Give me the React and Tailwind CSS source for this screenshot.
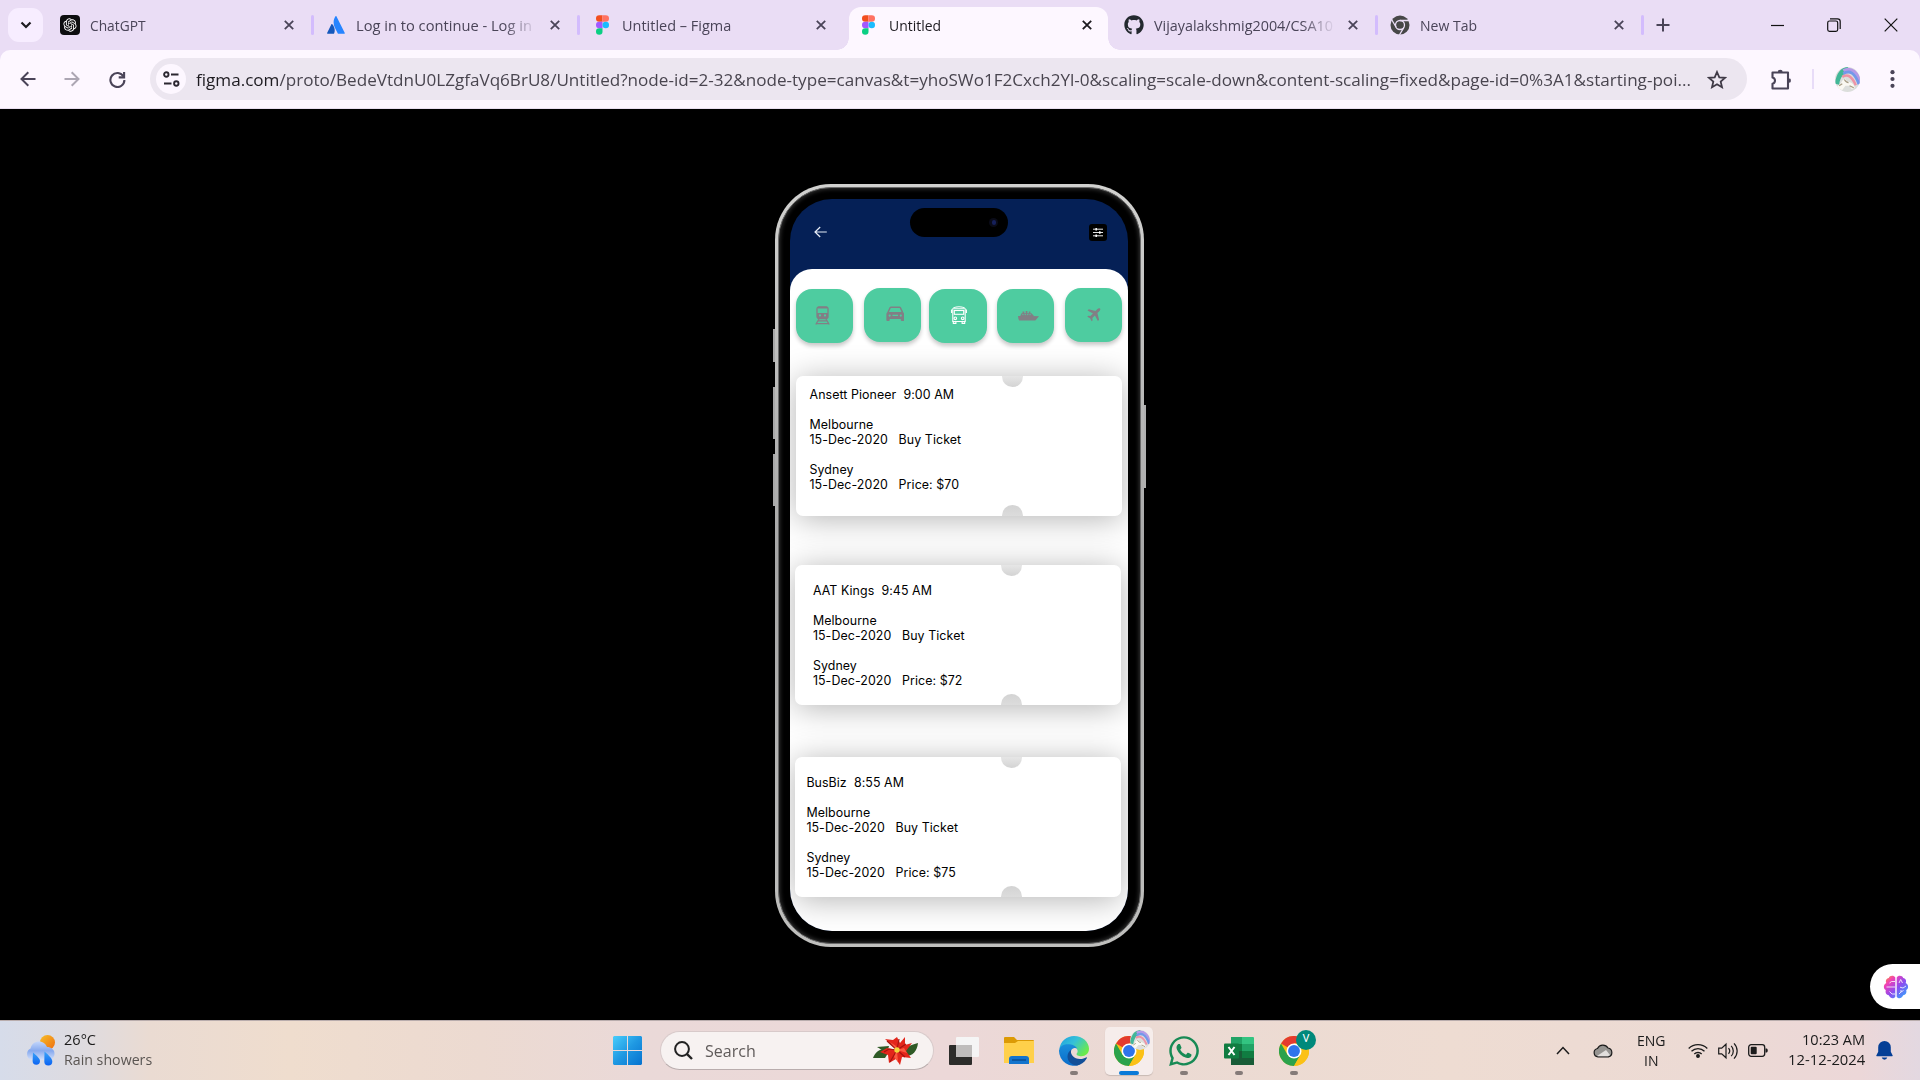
import React, { useLayoutEffect, useRef, useState } from "react";
import { FaGithub, FaWhatsapp } from "react-icons/fa";
import { RiOpenaiFill } from "react-icons/ri";

/* Text squeezed horizontally to a known width */
function Fit({ w, className = "", children }) {
  const ref = useRef(null);
  const [scale, setScale] = useState(1);
  useLayoutEffect(() => {
    setScale(w / ref.current.offsetWidth);
  }, [w]);
  return (
    <span className={"flex shrink-0 " + className} style={{ width: w }}>
      <span ref={ref} className="inline-block shrink-0 origin-left whitespace-pre" style={{ transform: `scaleX(${scale})` }}>
        {children}
      </span>
    </span>
  );
}

const FigmaLogo = () => (
  <svg width="13" height="20" viewBox="0 0 12 18">
    <path d="M3 0h3v6H3a3 3 0 0 1 0-6z" fill="#f24e1e" />
    <path d="M6 0h3a3 3 0 0 1 0 6H6z" fill="#ff7262" />
    <path d="M3 6h3v6H3a3 3 0 0 1 0-6z" fill="#a259ff" />
    <circle cx="9" cy="9" r="3" fill="#1abcfe" />
    <path d="M3 12h3v3a3 3 0 1 1-3-3z" fill="#0acf83" />
  </svg>
);

const AtlassianLogo = () => (
  <svg width="18" height="18" viewBox="0 0 18 18">
    <path d="M5.3 8.2c-.3-.3-.7-.3-.9.1L.1 17c-.2.4 0 .8.5.8h6c.2 0 .4-.1.5-.3C8.400 14.800 7.600 10.600 5.300 8.200z" fill="#1558bc" />
    <path d="M8.500.3C6 4.100 6.200 8.400 7.900 11.700l2.900 5.800c.1.2.3.3.5.3h6c.5 0 .7-.4.5-.8L9.400.3c-.2-.4-.7-.4-.9 0z" fill="#2684ff" />
  </svg>
);

const ChromeMono = () => (
  <svg width="20" height="20" viewBox="0 0 20 20">
    <circle cx="10" cy="10" r="9.500" fill="#474747" />
    <g stroke="#eaddf5" strokeWidth="1.300" fill="none">
      <circle cx="10" cy="10" r="4.500" />
      <path d="M10 5.500h9M6.100 12.300 1.600 4.500M13.900 12.300 9.400 20" />
    </g>
    <circle cx="10" cy="10" r="2.900" fill="#474747" />
  </svg>
);

const Cross = ({ color = "#4a4453" }) => (
  <svg width="10" height="10" viewBox="0 0 10 10">
    <path d="M.8.800 9.200 9.200M9.200.800.800 9.200" stroke={color} strokeWidth="1.800" />
  </svg>
);

const TABS = [
  { title: "ChatGPT", w: 56, icon: "gpt", sep: true },
  { title: "Log in to continue - Log in", w: 176, icon: "atl", sep: true, fade: true },
  { title: "Untitled – Figma", w: 109, icon: "figma" },
  { title: "Untitled", w: 52, icon: "figma", active: true },
  { title: "Vijayalakshmig2004/CSA10", w: 179, icon: "gh", sep: true, fade: true },
  { title: "New Tab", w: 57, icon: "chrome", sep: true },
];

function TabIcon({ name }) {
  if (name === "gpt")
    return (
      <span className="flex h-5 w-5 items-center justify-center rounded bg-[#0d0d0f] text-white">
        <RiOpenaiFill size={16} />
      </span>
    );
  if (name === "atl") return <AtlassianLogo />;
  if (name === "figma") return <FigmaLogo />;
  if (name === "gh") return <FaGithub size={20} color="#24292f" />;
  return <ChromeMono />;
}

function Tab({ tab }) {
  return (
    <div className={"relative flex h-[43px] shrink-0 items-center pb-[7px] " + (tab.active ? "w-[259px] mr-[7px] rounded-t-[12px] bg-[#fdf7ff]" : "w-[266px]")}>
      {tab.active && (
        <>
          <span className="absolute bottom-0 -left-3 h-3 w-3 bg-[radial-gradient(circle_at_0_0,transparent_11.5px,#fdf7ff_12px)]" />
          <span className="absolute bottom-0 -right-3 h-3 w-3 bg-[radial-gradient(circle_at_100%_0,transparent_11.5px,#fdf7ff_12px)]" />
        </>
      )}
      <span className="ml-[9px] flex w-5 justify-center">
        <TabIcon name={tab.icon} />
      </span>
      <div className={"ml-[10px] flex w-[180px] overflow-hidden text-[15px] leading-[22px] " + (tab.active ? "pl-px text-[#1d1b20]" : "text-[#4a4458]") + (tab.fade ? " [mask-image:linear-gradient(to_right,black_82%,transparent_101%)]" : "")}>
        <Fit w={tab.w}>{tab.title}</Fit>
      </div>
      <span className="ml-[13px] flex w-3 justify-center">
        <Cross color={tab.active ? "#1d1b20" : "#4a4458"} />
      </span>
      {tab.sep && <span className="ml-[16px] h-5 w-[3px] rounded-full bg-[#d3bcfd]" />}
    </div>
  );
}

function UnicornAvatar({ size }) {
  return (
    <svg width={size} height={size} viewBox="0 0 24 24">
      <defs>
        <clipPath id={"av" + size}><circle cx="12" cy="12" r="12" /></clipPath>
      </defs>
      <g clipPath={"url(#av" + size + ")"}>
        <rect width="24" height="24" fill="#dcdedc" />
        <path d="M0 16C1 6 6 0 12 0l3 4C9 5 5 9 4 17z" fill="#41b797" />
        <path d="M8 3.500c8-4 14 2 17 13" stroke="#b59ae6" strokeWidth="3" fill="none" />
        <path d="M8 6.500c6-4 11-1 15 10" stroke="#7398ea" strokeWidth="2.800" fill="none" />
        <path d="M7 9.500c5-3 9-1 13 8" stroke="#ee93a6" strokeWidth="2.400" fill="none" />
        <path d="M2 19c2-2 4-3 5-6l3-2 1 3c4 0 7 2 8 6l-3 1-2-3-4 0-3 4-4-1z" fill="#faf8f2" />
        <path d="M9 12c1 2 2 3 4 3M14 18l4 2M4 18l3-2" stroke="#a59a82" strokeWidth="1.100" fill="none" />
      </g>
    </svg>
  );
}

function Browser() {
  return (
    <header className="h-[109px] w-full bg-[#eaddf5]">
      <div className="flex h-[50px] items-end">
        <div className="mb-2 ml-2 flex h-[34px] w-[35px] items-center justify-center rounded-[11px] bg-[#f7edff]">
          <svg width="12" height="8" viewBox="0 0 12 8"><path d="m1.500 1.500 4.500 4.500 4.500-4.500" stroke="#1d1b20" strokeWidth="2.200" fill="none" /></svg>
        </div>
        <div className="ml-2 flex items-end">
          {TABS.map((t) => <Tab key={t.title} tab={t} />)}
        </div>
        <div className="flex h-[50px] w-[273px] items-center">
          <svg className="ml-[8px]" width="16" height="16" viewBox="0 0 16 16"><path d="M8 1.500v13M1.500 8h13" stroke="#4a4458" strokeWidth="2" /></svg>
          <svg className="ml-[100px]" width="13" height="13" viewBox="0 0 13 13"><path d="M0 6.500h13" stroke="#111" strokeWidth="1.200" /></svg>
          <svg className="ml-[43px]" width="14" height="14" viewBox="0 0 14 14" fill="none" stroke="#111" strokeWidth="1.200"><rect x=".7" y="3" width="10" height="10.300" rx="1.800" /><path d="M3 .8h7.500a2.700 2.700 0 0 1 2.700 2.700V11" /></svg>
          <svg className="ml-[43px]" width="14" height="14" viewBox="0 0 14 14"><path d="m.7.7 12.600 12.600M13.300.7.7 13.300" stroke="#111" strokeWidth="1.200" /></svg>
        </div>
      </div>
      <div className="flex h-[59px] items-center rounded-t-[10px] border-b border-[#e9dff0] bg-[#fdf7ff]">
        <svg className="ml-[19.5px]" width="16" height="16" viewBox="0 0 16 16" fill="none" stroke="#4a4458" strokeWidth="2"><path d="M15.500 8H1.800M8.300 1.200 1.500 8l6.800 6.800" /></svg>
        <svg className="ml-[28.5px]" width="16" height="16" viewBox="0 0 16 16" fill="none" stroke="#aca6b3" strokeWidth="2"><path d="M.5 8h13.700M7.700 1.200 14.500 8l-6.800 6.800" /></svg>
        <svg className="ml-[29px]" width="17" height="17" viewBox="0 0 17 17" fill="none" stroke="#4a4458" strokeWidth="2.100"><path d="M14.500 5.600A7 7 0 1 0 15.400 9" /><path d="M15.100 1v5.400H9.700" /></svg>
        <div className="ml-[24px] flex h-[42px] w-[1597px] items-center rounded-full bg-[#ece6f0]">
          <span className="ml-[6px] flex h-[30px] w-[30px] items-center justify-center rounded-full bg-[#fdf7ff]">
            <svg width="17" height="16" viewBox="0 0 17 16" fill="none" stroke="#2b2730" strokeWidth="1.900"><circle cx="3.300" cy="3.500" r="2.200" /><path d="M8 3.500h7.500M1 12.500h7.500" /><circle cx="13.300" cy="12.500" r="2.200" /></svg>
          </span>
          <div className="ml-[10px] pt-px text-[17px] leading-6 text-[#49454f]">
            <Fit w={1495}>
              <span className="text-[#1d1b20]">figma.com</span>/proto/BedeVtdnU0LZgfaVq6BrU8/Untitled?node-id=2-32&node-type=canvas&t=yhoSWo1F2Cxch2Yl-0&scaling=scale-down&content-scaling=fixed&page-id=0%3A1&starting-poi...
            </Fit>
          </div>
          <svg className="ml-[16px]" width="20" height="19" viewBox="0 0 20 19" fill="none" stroke="#3f3a46" strokeWidth="1.800"><path d="m10 2 2.300 5.300 5.700.5-4.300 3.800 1.300 5.600-5-3-5 3 1.300-5.600L2 7.800l5.700-.5z" /></svg>
        </div>
        <svg className="ml-[24px]" width="21" height="21" viewBox="0 0 21 21" fill="none" stroke="#4a4458" strokeWidth="2.100"><path d="M1.500 3.500h15.500v16H1.500v-4.700a3.300 3.300 0 0 0 0-6.400z" strokeLinejoin="round" /><path d="M7 3a2.200 2.200 0 0 1 4.400 0zM17.500 9.400a2.200 2.200 0 0 1 0 4.400z" fill="#4a4458" stroke="none" /><path d="M7.300 2.500h4M18.500 9.800v3.400" /></svg>
        <span className="ml-[20px] h-5 w-[2px] bg-[#e8dcf8]" />
        <span className="ml-[21px]"><UnicornAvatar size={25} /></span>
        <svg className="ml-[30px]" width="5" height="18" viewBox="0 0 5 18" fill="#4a4458"><circle cx="2.500" cy="2.200" r="2.100" /><circle cx="2.500" cy="9" r="2.100" /><circle cx="2.500" cy="15.800" r="2.100" /></svg>
      </div>
    </header>
  );
}

/* Transport category icons */
const TrainIcon = () => (
  <svg width="15" height="19" viewBox="0 0 15 19" fill="none" stroke="#827f85" strokeWidth="1.300">
    <rect x="2" y=".8" width="11" height="11.800" rx="2" />
    <path d="M3 1.600h9" strokeWidth="1.800" />
    <path fillRule="evenodd" d="M2 7h11v5H2zM5 8.300a1.100 1.100 0 1 0 0 2.200 1.100 1.100 0 0 0 0-2.200zM10 8.300a1.100 1.100 0 1 0 0 2.200 1.100 1.100 0 0 0 0-2.200z" fill="#827f85" stroke="none" />
    <path d="M4 13 .8 18.500M11 13l3.200 5.500M3.200 14.800h8.600M1.300 17.600h12.400" />
  </svg>
);
const CarIcon = () => (
  <svg width="18.500" height="16" viewBox="0 0 20 17" fill="#827f85">
    <path fillRule="evenodd" d="M1.200 7 3.700 1.600Q4.300.4 5.600.4h8.800q1.300 0 1.900 1.200L18.800 7q.8.700.8 1.900V15q0 1.200-1 1.200h-1.600q-1 0-1-1.200v-1H4v1q0 1.200-1 1.200H1.400q-1 0-1-1.200V8.900Q.4 7.700 1.200 7zM3.200 6.400h13.600l-2-4.500H5.200zM4 9a1.200 1.200 0 1 0 0 2.400A1.200 1.200 0 0 0 4 9zm12 0a1.200 1.200 0 1 0 0 2.400A1.200 1.200 0 0 0 16 9zM7 9.300v1.400h6V9.300z" />
  </svg>
);
const BusIcon = () => (
  <svg width="16" height="18" viewBox="0 0 16 18" fill="none" stroke="#fff" strokeWidth="1.100">
    <path d="M1.800 15.500V3Q2.500.8 8 .8T14.200 3v12.500z" />
    <path d="M3 2.700h10" />
    <rect x="3.300" y="4.500" width="9.400" height="3.800" />
    <path d="M.6 3.500v3.500M15.400 3.500v3.500" />
    <circle cx="4.300" cy="12.300" r="1.300" /><circle cx="11.700" cy="12.300" r="1.300" />
    <path d="M2.300 15.500v1.900h2.600v-1.900M11.100 15.500v1.900h2.600v-1.900" />
  </svg>
);
const ShipIcon = () => (
  <svg width="21" height="10" viewBox="0 0 21 10" fill="#827f85">
    <path d="M0 5h14l7 .2L17.300 9.600H1.200Q.2 8 0 5z" /><path d="M2.300 5 3.500 2.300h10L16 5zM4.500.5h1.800v2H4.500zM7.700 0h1.700v2.300H7.700zM10.800.5h1.600v2h-1.600z" />
    <path d="M4.300 3.600h9.500" stroke="#4ecca0" strokeWidth=".9" strokeDasharray="1.200 1.200" />
  </svg>
);
const PlaneIcon = () => (
  <svg width="15" height="14" viewBox="0 0 15 15" fill="#827f85">
    <path d="M14.500.6c-.8-.7-2-.4-2.800.4L9.600 3.100 2.400 1.300 1.100 2.600l5.800 3.200-2.700 2.800-2.300-.3L.8 9.400l3 1.700 1.700 3 1.100-1.100-.3-2.300L9 8l3.200 5.800 1.300-1.300-1.800-7.200 2.300-2.200c.8-.8 1.200-1.800.5-2.500z" />
  </svg>
);

const MODES = [
  { Icon: TrainIcon, cls: "ml-[0.5px] mt-[2.5px] pr-[3px]" },
  { Icon: CarIcon, cls: "ml-[11px] mt-[1.5px] pl-[4.5px] pb-[1px]" },
  { Icon: BusIcon, cls: "ml-[8px] mt-[2.5px] pl-[3px] pb-[1px]" },
  { Icon: ShipIcon, cls: "ml-[10.3px] mt-[2.5px] pl-[5px]" },
  { Icon: PlaneIcon, cls: "ml-[10.6px] mt-[1.5px] pr-px" },
];

const TRIPS = [
  { name: "Ansett Pioneer", time: "9:00 AM", price: "$70", cls: "mt-[33px] ml-px", pad: "pl-[13.5px] pt-[11px]" },
  { name: "AAT Kings", time: "9:45 AM", price: "$72", cls: "mt-[49px] ml-[0.4px]", pad: "pl-[17.5px] pt-[18px]" },
  { name: "BusBiz", time: "8:55 AM", price: "$75", cls: "mt-[52px] ml-[0.4px]", pad: "pl-[11px] pt-[18px]" },
];

function Ticket({ trip }) {
  return (
    <div className={"relative h-[140px] w-[326px] shrink-0 rounded-[7px] bg-white shadow-[0_3px_32px_rgba(0,0,0,0.3)] " + trip.cls}>
      <span className="absolute left-[206px] top-0 h-[11px] w-[21px] rounded-b-full bg-linear-to-b from-[#e6e6e6] to-[#d3d3d3]" />
      <span className="absolute bottom-0 left-[206px] h-[11px] w-[21px] rounded-t-full bg-linear-to-b from-[#d3d3d3] to-[#dcdcdc]" />
      <div className={"whitespace-pre text-[12.4px] leading-[15px] tracking-[0.08px] text-black " + trip.pad}>
        <p>{trip.name + "  " + trip.time}</p>
        <p className="mt-[15px]">Melbourne</p>
        <p>{"15-Dec-2020   Buy Ticket"}</p>
        <p className="mt-[15px]">Sydney</p>
        <p>{"15-Dec-2020   Price: " + trip.price}</p>
      </div>
    </div>
  );
}

function Phone() {
  return (
    <div className="relative mt-[75px] h-[763px] w-[369px] rounded-[56px] bg-linear-to-b from-[#d2d2d0] via-[#a6a6a6] to-[#c0c0be] p-[3px] font-['Inter',sans-serif]">
      <span className="absolute -left-[2px] top-[145px] h-[33px] w-[2px] bg-[#a8a8a8]" />
      <span className="absolute -left-[2px] top-[203px] h-[52px] w-[2px] bg-[#a8a8a8]" />
      <span className="absolute -left-[2px] top-[270px] h-[52px] w-[2px] bg-[#a8a8a8]" />
      <span className="absolute -right-[2px] top-[221px] h-[83px] w-[2px] bg-[#b0b0b0]" />
      <div className="h-full w-full rounded-[53px] border border-[#6a6a6a] bg-black px-[11px] pt-[11px] shadow-[inset_0_0_4px_1px_#333]">
        <div className="relative h-[732px] w-[338px] overflow-hidden rounded-[42px] bg-[#052056]">
          <div className="absolute left-[120px] top-[9px] flex h-[29px] w-[98px] items-center justify-end rounded-full bg-black pr-[10px]">
            <span className="flex h-[9px] w-[9px] items-center justify-center rounded-full bg-[#0a0b18]"><span className="h-[5px] w-[4px] rounded-full bg-[#16205a]" /></span>
          </div>
          <div className="flex h-[70px] items-start justify-between pl-[24px] pr-[21px] pt-[25px]">
            <svg className="mt-[2px]" width="13" height="12" viewBox="0 0 13 12" fill="none" stroke="#e6ebf5" strokeWidth="1.200"><path d="M12.800 6H1M6.200 1 1 6l5.200 5" /></svg>
            <span className="flex h-[17px] w-[18px] items-center justify-center rounded-[3px] bg-black">
              <svg width="10" height="9" viewBox="0 0 10 9" fill="none" stroke="#fff"><path d="M0 1.200h10M0 4.500h10M0 7.800h10" strokeWidth=".9" /><path d="M3.200 0v2.400M6.800 3.300v2.400M3.200 6.600V9" strokeWidth="1.500" /></svg>
            </span>
          </div>
          <div className="flex h-[662px] flex-col overflow-hidden rounded-t-[22px] bg-white pl-[5px]">
            <div className="mt-[17px] flex h-[57px] shrink-0 items-start">
              {MODES.map(({ Icon, cls }, i) => (
                <div key={i} className={"flex h-[54.5px] w-[57.4px] shrink-0 items-center justify-center rounded-[16px] bg-[#4ecca0] shadow-[0_3px_4px_rgba(0,0,0,0.22)] " + cls}>
                  <Icon />
                </div>
              ))}
            </div>
            {TRIPS.map((t) => <Ticket key={t.name} trip={t} />)}
          </div>
        </div>
      </div>
    </div>
  );
}

function Brain() {
  return (
    <svg width="26" height="24" viewBox="0 0 26 24">
      <defs><linearGradient id="br" x1="0" y1="0" x2="1" y2="1"><stop offset="0" stopColor="#ffa31a" /><stop offset=".25" stopColor="#f03fb8" /><stop offset=".55" stopColor="#8b4df0" /><stop offset="1" stopColor="#22b8ff" /></linearGradient></defs>
      <path d="M12.300 2.500C11 0 6.500.3 5.800 3 3 3.500 2.300 6 3.300 8 .2 9.300.2 14 2.800 15c-.8 3 .8 5 3 5.300 1.500 3.700 5.200 3.700 6.500 1.500zM13.700 2.500C15 0 19.500.3 20.200 3c2.800.500 3.500 3 2.500 5 3.100 1.300 3.100 6 .5 7 .8 3-.8 5-3 5.300-1.500 3.700-5.200 3.700-6.500 1.500z" fill="url(#br)" />
      <path d="M12 6.500H8.500L6.500 8M12 12H3.500M12 19H9l-2.500-2.500M16 8l1.700-3.500L19.500 8M17 12.200l3 .8 3-2M16 19l2-2v-2M18 17l2.500-1.500" stroke="#fff" strokeWidth=".8" fill="none" />
    </svg>
  );
}

const Chrome = () => (
  <svg width="30" height="30" viewBox="0 0 48 48">
    <circle cx="24" cy="24" r="24" fill="#fbbf12" />
    <path d="M24 24 3.200 12A24 24 0 0 1 44.800 12H24z" fill="#e33b2e" />
    <path d="M3.200 12A24 24 0 0 0 24 48l10.400-18L24 24 13.600 30z" fill="#2ba24c" />
    <path d="M44.800 12H24l10.400 18L24 48A24 24 0 0 0 44.800 12z" fill="#fbc116" />
    <circle cx="24" cy="24" r="12" fill="#fff" /><circle cx="24" cy="24" r="9.500" fill="#2f74ea" />
  </svg>
);

const Edge = () => (
  <svg width="30" height="30" viewBox="0 0 30 30">
    <defs>
      <linearGradient id="eg" x1="0" y1="0" x2="1" y2=".6"><stop offset="0" stopColor="#1f9fe0" /><stop offset=".5" stopColor="#35c1d8" /><stop offset="1" stopColor="#6bea4c" /></linearGradient>
      <linearGradient id="eb" x1="0" y1="0" x2="0" y2="1"><stop offset="0" stopColor="#1a8edb" /><stop offset="1" stopColor="#0a6cc9" /></linearGradient>
    </defs>
    <path d="M.3 13C1.500 5 8 0 15 0c8.500 0 15 6 15 12.800 0 4.700-3.600 7.400-7.600 7.400-3 0-5.200-1-4.800-2.500.8-1 1.200-2 .9-3.500-.700-3.200-3.500-4.800-7-4.800-5 0-9 1.500-11.200 3.600z" fill="url(#eg)" />
    <path d="M0 14.500C1 9 6.500 7.800 10.800 8.300c3.500.4 6.400 2 7.500 4.500-2-1.700-5.200-1-6.300 1.800-2 5 1.800 13.500 9 13.900A15 15 0 0 1 0 14.500z" fill="url(#eb)" />
    <path d="M12.300 13.700C10.500 18 15 23 21 23c2.700 0 4.700-.8 6-1.600.6-.3 1.100.3.8.8C25.500 26.500 21.500 29 18 29.500 12 29 8.500 25 8.500 20.500c0-3 1.500-5.500 3.800-6.800z" fill="#124f98" />
  </svg>
);

const Poinsettia = () => (
  <svg width="45" height="30" viewBox="0 0 45 30">
    <path d="M0 22C3 15 8 11 17 14L12 22 0 22zM4 11l12-1-2 7zM30 17c3-7 8-8 15-10-1 9-6 14-15 13z" fill="#2f5a26" />
    <path d="M24 14 12 3l8 1 4-3 3 6 5-6 0 8 7-2-6 8 5 7-9-1-2 8-4-6-7 4-1-8-8-3 7-4z" fill="#e3261b" />
    <path d="m24 14-8-1-5 3M24 14l2-11M24 14l9-6M24 14l8 7M24 14l-7 12M24 14 14 5" stroke="#a5140f" strokeWidth="1.200" fill="none" />
    <path d="m24 14-7-8 6 4zM24 14l7-2 3 5zM24 14l1 12-4-5z" fill="#fb5a40" />
    <circle cx="24" cy="14" r="2.700" fill="#f2d43a" />
  </svg>
);

function TaskItem({ active, dot, children }) {
  return (
    <div className={"relative flex h-12 w-12 items-center justify-center rounded-[5px] " + (active ? "bg-[#f6edeb] shadow-[0_1px_1px_rgba(0,0,0,0.15)]" : "")}>
      {children}
      {active && <span className="absolute bottom-0 h-1 w-5 rounded-full bg-[#0a7ad8]" />}
      {dot && <span className="absolute bottom-0 h-1 w-2 rounded-full bg-[#857b79]" />}
    </div>
  );
}

function Taskbar() {
  return (
    <footer className="flex h-[60px] w-full items-center border-t border-[#b9adad] bg-[linear-gradient(90deg,#d6dcea_0,#dedbe0_80px,#eadbd2_150px,#efddce_290px,#ecdad1_480px,#ead9d8_640px,#ecd8d8_950px,#ebdad3_1150px,#eedcd2_1450px,#ecdad4_1700px,#ecd7d8_1860px,#e3d8e1_1920px)] text-[#1b1b1b]">
      <div className="flex w-[613px] items-center">
        <svg className="ml-[25px]" width="30" height="31" viewBox="0 0 30 31">
          <defs>
            <linearGradient id="sun" x1="0" y1="0" x2="1" y2="1"><stop offset="0" stopColor="#f6bf2a" /><stop offset="1" stopColor="#ef6c0e" /></linearGradient>
            <linearGradient id="cl" x1="0" y1="0" x2="0" y2="1"><stop offset="0" stopColor="#c3d6fb" /><stop offset=".5" stopColor="#86a9ee" /><stop offset="1" stopColor="#d3e0fa" /></linearGradient>
            <linearGradient id="dr" x1="0" y1="0" x2="0" y2="1"><stop offset="0" stopColor="#3aa5f8" /><stop offset="1" stopColor="#0b62f2" /></linearGradient>
          </defs>
          <circle cx="22.500" cy="7.500" r="7.500" fill="url(#sun)" />
          <path d="M6.500 25a6.200 6.200 0 0 1-1-11.500C6.500 9 10 6.500 14 6.500c4 0 7 2.500 8 5.500 4 0 7.500 2.500 7.500 6.500s-3 6.500-6.500 6.500z" fill="url(#cl)" />
          <path d="M8 17.500c4 3.500 7 6 7 8.500a3.700 3.700 0 0 1-7.400 0zM19.500 16.500c4.500 4 7.800 7 7.800 10a4 4 0 0 1-8 0z" fill="url(#dr)" />
        </svg>
        <div className="ml-[9px] flex flex-col pb-[4px] text-[15px] leading-5">
          <Fit w={32}>26°C</Fit>
          <Fit w={88} className="text-[#5a5552]">Rain showers</Fit>
        </div>
      </div>
      <svg width="29" height="29" viewBox="0 0 29 29">
        <defs><linearGradient id="win" x1="0" y1="0" x2="1" y2="1"><stop offset="0" stopColor="#48cdfb" /><stop offset=".5" stopColor="#1f98e2" /><stop offset="1" stopColor="#0672cf" /></linearGradient></defs>
        <path d="M1 0h13v14H0V1zM15 0h13l1 1v13H15zM0 15h14v14H1l-1-1zM15 15h14v13l-1 1H15z" fill="url(#win)" />
      </svg>
      <div className="ml-[18px] flex h-[39px] w-[274px] items-center rounded-full border border-[#d8caca] border-b-[#b9adad] bg-[#f7f2f1]">
        <svg className="ml-[13px]" width="19" height="19" viewBox="0 0 19 19" fill="none" stroke="#222" strokeWidth="2"><circle cx="8" cy="8" r="6.900" /><path d="m12.800 12.800 5.200 5.200" strokeWidth="2.400" /></svg>
        <Fit w={51} className="ml-[12px] text-[17px] leading-6 text-[#605b5a]">Search</Fit>
        <span className="ml-[117px]"><Poinsettia /></span>
      </div>
      <div className="ml-[6px] flex gap-[7px]">
        <TaskItem>
          <svg width="30" height="28" viewBox="0 0 30 28"><rect y="8" width="23" height="20" rx="1" fill="#2c2c2a" /><rect x="7" width="23" height="20" rx="1" fill="#f5f5f5" /><path d="M7 8h16v12H7z" fill="#bfbdbc" /></svg>
        </TaskItem>
        <TaskItem>
          <svg width="30" height="27" viewBox="0 0 30 27"><path d="M0 1q0-1 1-1h9l3 3h16q1 0 1 1v5H0z" fill="#dc9a05" /><path d="M0 6h11l3-2h16v22H0z" fill="#ffd04a" /><path d="M5 27v-5q0-3 3-3h14q3 0 3 3v5z" fill="#1374cd" /><path d="M8 23h14" stroke="#0a4c91" strokeWidth="1.500" /></svg>
        </TaskItem>
        <TaskItem dot><Edge /></TaskItem>
        <TaskItem active>
          <Chrome />
          <span className="absolute right-[3px] top-[3px]"><UnicornAvatar size={20} /></span>
        </TaskItem>
        <TaskItem dot><FaWhatsapp size={34} color="#178a55" /></TaskItem>
        <TaskItem dot>
          <svg width="30" height="28" viewBox="0 0 30 28"><path d="M7 0h11v7H7z" fill="#21a366" /><path d="M18 0h11q1 0 1 1v6H18z" fill="#33c481" /><path d="M7 7h11v7H7z" fill="#107c41" /><path d="M18 7h12v7H18z" fill="#21a366" /><path d="M7 14h11v7H7z" fill="#185c37" /><path d="M18 14h12v7H18z" fill="#107c41" /><path d="M7 21h23v7H7z" fill="#185c37" /><rect y="6.500" width="15" height="15" rx="1" fill="#107c41" /><path d="m4.500 10 6 8M10.500 10l-6 8" stroke="#fff" strokeWidth="2" /></svg>
        </TaskItem>
        <TaskItem dot>
          <Chrome />
          <span className="absolute right-[2px] top-[3px] flex h-5 w-5 items-center justify-center rounded-full bg-[#00897b] font-['Roboto',sans-serif] text-[11px] text-white">V</span>
        </TaskItem>
      </div>
      <div className="ml-[238px] flex h-full items-center text-[15px] leading-5">
        <svg width="14" height="9" viewBox="0 0 14 9"><path d="m1 8 6-6.500L13 8" stroke="#1b1b1b" strokeWidth="1.500" fill="none" /></svg>
        <svg className="ml-[23px]" width="20" height="15" viewBox="0 0 20 15"><path d="M5 13.800a4.200 4.200 0 0 1-.5-8.300A6 6 0 0 1 15 5a4.500 4.500 0 0 1 .5 8.800z" fill="#969491" stroke="#1b1b1b" strokeWidth="1.200" /><path d="M4 13 13 7l4 5-2 1.200H5z" fill="#e2dfdd" /></svg>
        <div className="ml-[23px] flex w-[30px] flex-col items-center pb-[2px]">
          <Fit w={29}>ENG</Fit>
          <Fit w={14}>IN</Fit>
        </div>
        <svg className="ml-[22px]" width="20" height="15" viewBox="0 0 20 15" fill="none" stroke="#1b1b1b" strokeWidth="1.300"><path d="M.7 5.500a13 13 0 0 1 18.600 0M3.500 8.300a9.200 9.200 0 0 1 13 0M6.300 11a5.300 5.300 0 0 1 7.400 0" /><circle cx="10" cy="13" r="1.300" fill="#1b1b1b" /></svg>
        <svg className="ml-[10px]" width="20" height="18" viewBox="0 0 20 18" fill="none" stroke="#1b1b1b" strokeWidth="1.200"><path d="M.7 6.200h3L8 2.200v13.600l-4.300-4h-3zM10.500 6.200a4.200 4.200 0 0 1 0 5.600M13.200 3.800a7.500 7.500 0 0 1 0 10.400M16 1.300a11 11 0 0 1 0 15.400" /></svg>
        <svg className="ml-[10px]" width="20" height="13" viewBox="0 0 20 13"><rect x=".7" y=".7" width="16" height="11.600" rx="2.500" fill="none" stroke="#1b1b1b" strokeWidth="1.300" /><rect x="2.700" y="2.700" width="6" height="7.600" rx="1" fill="#1b1b1b" /><path d="M17.500 4.500h1.200q1 0 1 2t-1 2h-1.200z" fill="#1b1b1b" /></svg>
        <div className="ml-[20px] flex w-[77px] flex-col items-end pb-[4px]">
          <Fit w={63}>10:23 AM</Fit>
          <Fit w={77}>12-12-2024</Fit>
        </div>
        <svg className="ml-[11px]" width="17" height="19" viewBox="0 0 17 19" fill="#053f96"><path d="M8.500 0a6.300 6.300 0 0 1 6.300 6.300v4.500l1.900 3.700q.2.800-.6.800H.9q-.8 0-.6-.8l1.900-3.700V6.300A6.300 6.300 0 0 1 8.500 0zM5.700 16.500h5.600a2.900 2.900 0 0 1-5.600 0z" /></svg>
      </div>
    </footer>
  );
}

export default function App() {
  return (
    <div className="flex h-[1080px] w-[1920px] flex-col overflow-hidden bg-black font-['Open_Sans','Noto_Sans',sans-serif]">
      <Browser />
      <main className="relative flex h-[911px] items-start bg-black pl-[775px]">
        <Phone />
        <aside className="absolute bottom-[11px] right-0 flex h-[45px] w-[50px] items-center rounded-l-full bg-white pl-[13px]">
          <Brain />
        </aside>
      </main>
      <Taskbar />
    </div>
  );
}
